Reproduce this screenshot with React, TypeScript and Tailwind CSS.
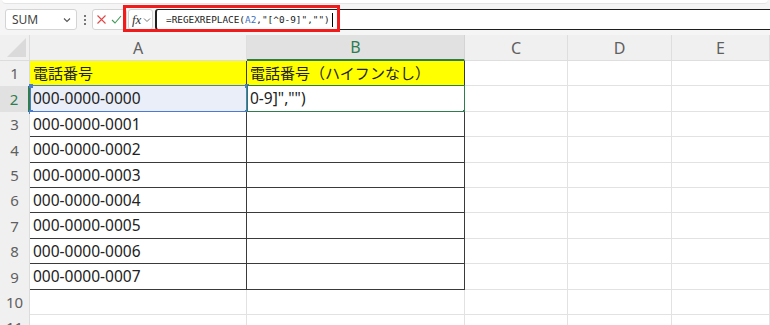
import type { ReactNode } from 'react';

const cols = ['A', 'B', 'C', 'D', 'E'];
const phones = Array.from({ length: 8 }, (_, i) => `000-0000-000${i}`);

function Cell({
  row,
  col,
  children,
}: {
  row: number;
  col: number;
  children?: ReactNode;
}) {
  const inTable = row >= 1 && row <= 9 && col <= 1;
  const yellow = row === 1 && inTable;
  const refCell = row === 2 && col === 0;
  const editCell = row === 2 && col === 1;

  return (
    <div
      className={`relative h-[25.4px] flex items-center pl-[3px] pt-[1px] whitespace-nowrap overflow-visible border-r border-b ${
        inTable ? 'border-[#3a3a3a]' : 'border-[#e2e2e2]'
      } ${yellow ? 'bg-[#ffff00]' : refCell ? 'bg-[#e9eef8]' : 'bg-white'}`}
    >
      {children}
      {refCell && (
        <div className="absolute left-0 top-[-1px] right-[-1px] bottom-[-1px] border border-[#4a7bd0] pointer-events-none">
          <span className="absolute left-[-2px] top-[-2px] w-[4px] h-[4px] bg-[#4a7bd0]" />
          <span className="absolute right-[-3px] top-[-2px] w-[4px] h-[4px] bg-[#4a7bd0]" />
          <span className="absolute left-[-2px] bottom-[-3px] w-[4px] h-[4px] bg-[#4a7bd0]" />
          <span className="absolute right-[-3px] bottom-[-3px] w-[4px] h-[4px] bg-[#4a7bd0]" />
        </div>
      )}
      {editCell && (
        <div className="absolute left-0 top-[-1px] right-[-1px] bottom-[-1px] border-[1.5px] border-[#2f7d4f] pointer-events-none">
          <span className="absolute right-[-3px] bottom-[-3px] w-[4px] h-[4px] bg-[#2f7d4f]" />
        </div>
      )}
    </div>
  );
}

function FormulaBar() {
  return (
    <div className="relative h-[35px] bg-[#f5f5f5]">
      <div className="h-[4px] mx-[2px] bg-white rounded-b-[5px] border-b border-[#e4e4e4]" />
      <div className="flex items-stretch h-[21px] mt-[5px]">
        <div className="ml-[5px] w-[72px] flex items-center justify-between bg-white border border-[#d4d4d4] rounded-[3px] pl-[6px] pr-[4px]">
          <span className="text-[12px] text-[#444]">SUM</span>
          <svg width="10" height="10" viewBox="0 0 10 10" fill="none" stroke="#555" strokeWidth="1.1">
            <path d="M2 3.5l3 3 3-3" />
          </svg>
        </div>
        <div className="w-[15px] flex flex-col items-center justify-center gap-[2px]">
          <span className="w-[2px] h-[2px] bg-[#777]" />
          <span className="w-[2px] h-[2px] bg-[#777]" />
          <span className="w-[2px] h-[2px] bg-[#777]" />
        </div>
        <div className="w-[35px] flex items-center justify-between bg-white border border-[#d4d4d4] rounded-[3px] pl-[3px] pr-[4px]">
          <svg width="11" height="11" viewBox="0 0 11 11" fill="none" stroke="#e04848" strokeWidth="1.1">
            <path d="M1.5 1.5l8 8M9.5 1.5l-8 8" />
          </svg>
          <svg width="11" height="11" viewBox="0 0 11 11" fill="none" stroke="#3f9a58" strokeWidth="1.1">
            <path d="M1 6l3 3 6-7" />
          </svg>
        </div>
        <div className="ml-[1px] w-[25px] flex items-center bg-white border border-[#d4d4d4] rounded-[3px] pl-[3px] gap-[2px]">
          <span className="text-[13px] italic text-[#333] font-['Liberation_Serif',serif] leading-none">fx</span>
          <svg width="8" height="8" viewBox="0 0 8 8" fill="none" stroke="#777" strokeWidth="1">
            <path d="M1 2.5l3 3 3-3" />
          </svg>
        </div>
        <div className="ml-[2px] flex-1 flex items-center bg-white border-y-[1.5px] border-l-[2px] border-[#1f1f1f] rounded-l-[3px] pl-[9px]">
          <span className="text-[9.4px] text-[#222] font-['DejaVu_Sans_Mono',monospace] leading-none pt-[1px]">
            =REGEXREPLACE(<span className="text-[#3a70c0]">A2</span>,"[^0-9]","")
          </span>
          <span className="ml-[2px] w-[1px] h-[14px] bg-black" />
        </div>
      </div>
      <div className="absolute left-[123px] top-[5px] w-[217px] h-[27px] border-[3px] border-[#f21b1b]" />
    </div>
  );
}

function RowCells({ r }: { r: number }) {
  let a: ReactNode = null;
  let b: ReactNode = null;
  if (r === 1) {
    a = <span className="text-[15px] text-[#222]">電話番号</span>;
    b = <span className="text-[15px] text-[#222]">電話番号（ハイフンなし）</span>;
  } else if (r <= 9) {
    a = <span className="text-[15.5px] text-[#222]">{phones[r - 2]}</span>;
  }
  if (r === 2) b = <span className="text-[15.5px] text-[#222]">{'0-9]",""'})</span>;

  return (
    <>
      <div
        className={`h-[25.4px] flex items-center justify-center text-[15px] ${
          r === 2
            ? 'bg-[#e1e1e1] text-[#2f7d4f] border-r-2 border-[#2f7d4f]'
            : 'bg-[#f0f0f0] text-[#5f5f5f] border-r border-[#dcdcdc]'
        }`}
      >
        {r}
      </div>
      <Cell row={r} col={0}>{a}</Cell>
      <Cell row={r} col={1}>{b}</Cell>
      <Cell row={r} col={2} />
      <Cell row={r} col={3} />
      <Cell row={r} col={4} />
    </>
  );
}

export default function App() {
  return (
    <div className="w-[770px] h-[325px] overflow-hidden bg-white font-['Noto_Sans','Noto_Sans_CJK_JP',sans-serif]">
      <FormulaBar />
      <div className="grid grid-cols-[30px_217px_218px_103px_104px_98px]">
        {/* header row */}
        <div className="relative h-[26px] bg-[#f0f0f0] border-r border-b border-[#dcdcdc]">
          <svg className="absolute right-[3px] bottom-[3px]" width="19" height="19" viewBox="0 0 19 19">
            <path d="M19 0V19H0Z" fill="#dadada" />
          </svg>
        </div>
        {cols.map((c) => (
          <div
            key={c}
            className={`h-[26px] flex items-center justify-center text-[16px] border-r ${
              c === 'B'
                ? 'bg-[#e1e1e1] text-[#2f7d4f] border-b-2 border-b-[#2f7d4f] border-r-[#d4d4d4]'
                : 'bg-[#f0f0f0] text-[#5f5f5f] border-b border-[#dedede]'
            }`}
          >
            {c}
          </div>
        ))}

        {Array.from({ length: 11 }, (_, i) => i + 1).map((r) => (
          <RowCells key={r} r={r} />
        ))}
      </div>
    </div>
  );
}
